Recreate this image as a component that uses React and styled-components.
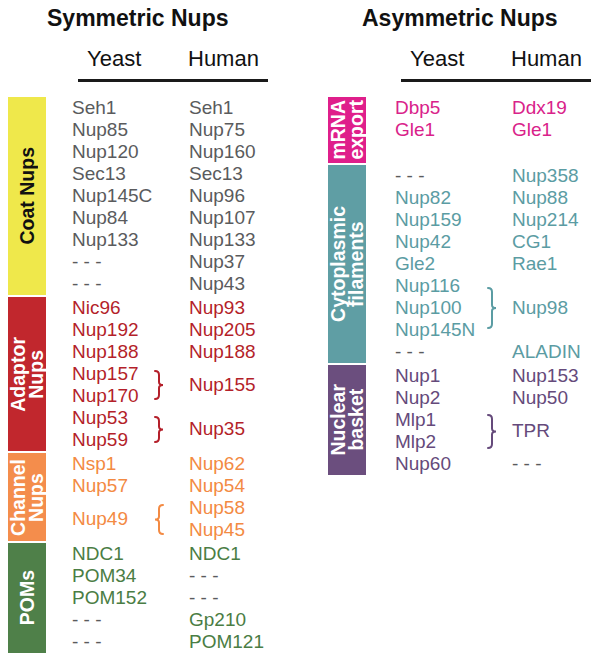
import { memo } from 'react'
import styled, { createGlobalStyle } from 'styled-components'

const GRAY = '#5a5b5d'

const panels = [
  {
    title: 'Symmetric Nups',
    titleIndent: 39,
    headIndent: 70,
    listIndent: 26,
    cols: '82px 35px auto',
    sections: [
      {
        label: ['Coat Nups'],
        bar: '#efe84b',
        labelColor: '#111',
        color: GRAY,
        rows: 9,
        yeast: ['Seh1', 'Nup85', 'Nup120', 'Sec13', 'Nup145C', 'Nup84', 'Nup133', '---', '---'],
        human: ['Seh1', 'Nup75', 'Nup160', 'Sec13', 'Nup96', 'Nup107', 'Nup133', 'Nup37', 'Nup43'],
        braces: []
      },
      {
        label: ['Adaptor', 'Nups'],
        bar: '#c1272d',
        labelColor: '#fff',
        color: '#b41f2a',
        rows: 7,
        yeast: ['Nic96', 'Nup192', 'Nup188', 'Nup157', 'Nup170', 'Nup53', 'Nup59'],
        human: ['Nup93', 'Nup205', 'Nup188', { text: 'Nup155', span: 2 }, { text: 'Nup35', span: 2 }],
        braces: [
          { row: 4, span: 2, h: 30, dir: 'right' },
          { row: 6, span: 2, h: 27, dir: 'right' }
        ]
      },
      {
        label: ['Channel', 'Nups'],
        bar: '#f48d4c',
        labelColor: '#fff',
        color: '#f38a43',
        rows: 4,
        yeast: ['Nsp1', 'Nup57', { text: 'Nup49', span: 2 }],
        human: ['Nup62', 'Nup54', 'Nup58', 'Nup45'],
        braces: [{ row: 3, span: 2, h: 31, dir: 'left' }]
      },
      {
        label: ['POMs'],
        bar: '#4f8049',
        labelColor: '#fff',
        color: '#4a7d44',
        rows: 5,
        yeast: ['NDC1', 'POM34', 'POM152', '---', '---'],
        human: ['NDC1', '---', '---', 'Gp210', 'POM121'],
        braces: []
      }
    ]
  },
  {
    title: 'Asymmetric Nups',
    titleIndent: 34,
    headIndent: 73,
    listIndent: 29,
    cols: '92px 25px auto',
    sections: [
      {
        label: ['mRNA', 'export'],
        bar: '#df1f8b',
        labelColor: '#fff',
        color: '#d9228a',
        rows: 3,
        yeast: ['Dbp5', 'Gle1', ''],
        human: ['Ddx19', 'Gle1', ''],
        braces: []
      },
      {
        label: ['Cytoplasmic', 'filaments'],
        bar: '#5f9ea4',
        labelColor: '#fff',
        color: '#5b9ca3',
        rows: 9,
        yeast: ['---', 'Nup82', 'Nup159', 'Nup42', 'Gle2', 'Nup116', 'Nup100', 'Nup145N', '---'],
        human: ['Nup358', 'Nup88', 'Nup214', 'CG1', 'Rae1', { text: 'Nup98', span: 3 }, 'ALADIN'],
        braces: [{ row: 6, span: 3, h: 42, dir: 'right' }]
      },
      {
        label: ['Nuclear', 'basket'],
        bar: '#6b4e7e',
        labelColor: '#fff',
        color: '#654a7b',
        rows: 5,
        yeast: ['Nup1', 'Nup2', 'Mlp1', 'Mlp2', 'Nup60'],
        human: ['Nup153', 'Nup50', { text: 'TPR', span: 2 }, '---'],
        braces: [{ row: 3, span: 2, h: 35, dir: 'right' }]
      }
    ]
  }
]

// turn a column of names into grid cells with row start + span
function placeCells(items) {
  let row = 1
  return items.map((item) => {
    const cell = typeof item === 'string' ? { text: item, span: 1 } : item
    const placed = { ...cell, row }
    row += cell.span
    return placed
  })
}

function Brace({ h, dir, color }) {
  const m = h / 2
  const d = `M1 1 C4 1 5 2 5 5 L5 ${m - 3} C5 ${m - 1} 6 ${m} 9 ${m} C6 ${m} 5 ${m + 1} 5 ${m + 3} L5 ${h - 5} C5 ${h - 2} 4 ${h - 1} 1 ${h - 1}`
  return (
    <svg width="10" height={h} viewBox={`0 0 10 ${h}`}>
      <path
        d={d}
        fill="none"
        stroke={color}
        strokeWidth="2"
        strokeLinecap="round"
        transform={dir === 'left' ? 'translate(10 0) scale(-1 1)' : undefined}
      />
    </svg>
  )
}

const Section = memo(function Section({ section, indent, cols }) {
  const yeast = placeCells(section.yeast)
  const human = placeCells(section.human)
  return (
    <SectionRow>
      <Bar $bg={section.bar} $rows={section.rows}>
        <BarLabel $color={section.labelColor}>
          {section.label.map((line) => <span key={line}>{line}</span>)}
        </BarLabel>
      </Bar>
      <ListGrid $rows={section.rows} $cols={cols} $indent={indent}>
        {yeast.map((c) => c.text && (
          <Cell key={'y' + c.row} $col={1} $row={c.row} $span={c.span}
            $color={c.text === '---' ? GRAY : section.color}>
            {c.text === '---' ? '- - -' : c.text}
          </Cell>
        ))}
        {section.braces.map((b) => (
          <BraceCell key={'b' + b.row} $row={b.row} $span={b.span}>
            <Brace h={b.h} dir={b.dir} color={section.color} />
          </BraceCell>
        ))}
        {human.map((c) => c.text && (
          <Cell key={'h' + c.row} $col={3} $row={c.row} $span={c.span}
            $color={c.text === '---' ? GRAY : section.color}>
            {c.text === '---' ? '- - -' : c.text}
          </Cell>
        ))}
      </ListGrid>
    </SectionRow>
  )
})

export default memo(function App() {
  return (
    <>
      <GlobalStyle />
      <Page>
        {panels.map((panel) => (
          <Panel key={panel.title}>
            <Title $indent={panel.titleIndent}>{panel.title}</Title>
            <HeadRow $indent={panel.headIndent}>
              <span>Yeast</span>
              <span>Human</span>
            </HeadRow>
            <Sections>
              {panel.sections.map((s) => (
                <Section key={s.label.join(' ')} section={s} indent={panel.listIndent} cols={panel.cols} />
              ))}
            </Sections>
          </Panel>
        ))}
      </Page>
    </>
  )
})

const GlobalStyle = createGlobalStyle`
  body {
    margin: 0;
    background: #fff;
    font-family: "Liberation Sans", Arial, sans-serif;
  }
`

const Page = styled.div`
  display: flex;
  width: 600px;
  height: 659px;
  padding-left: 8px;
  box-sizing: border-box;
`

const Panel = styled.section`
  display: flex;
  flex-direction: column;
  width: 320px;

  &:last-child {
    width: 272px;
  }
`

const Title = styled.h2`
  margin: 5px 0 0;
  padding-left: ${(p) => p.$indent}px;
  font-size: 23px;
  line-height: 26px;
  font-weight: bold;
  color: #111;
`

const HeadRow = styled.div`
  display: grid;
  grid-template-columns: 101px auto;
  width: 190px;
  margin: 16px 0 0 ${(p) => p.$indent}px;
  padding: 0 0 8px 9px;
  box-sizing: border-box;
  border-bottom: 3px solid #1a1a1a;
  font-size: 22px;
  line-height: 24px;
  color: #111;
`

const Sections = styled.div`
  display: flex;
  flex-direction: column;
  gap: 2px;
  margin-top: 15px;
`

const SectionRow = styled.div`
  display: flex;
`

const Bar = styled.div`
  flex: 0 0 38px;
  height: ${(p) => p.$rows * 22}px;
  background: ${(p) => p.$bg};
  display: flex;
  align-items: center;
  justify-content: center;
  overflow: hidden;
`

const BarLabel = styled.div`
  writing-mode: vertical-rl;
  transform: rotate(180deg);
  display: flex;
  flex-direction: column;
  align-items: center;
  font-size: 19.5px;
  line-height: 18px;
  font-weight: bold;
  color: ${(p) => p.$color};
  white-space: nowrap;
`

const ListGrid = styled.div`
  display: grid;
  grid-template-columns: ${(p) => p.$cols};
  grid-template-rows: repeat(${(p) => p.$rows}, 22px);
  margin-left: ${(p) => p.$indent}px;
`

const Cell = styled.div`
  grid-column: ${(p) => p.$col};
  grid-row: ${(p) => p.$row} / span ${(p) => p.$span};
  align-self: center;
  font-size: 19px;
  line-height: 22px;
  color: ${(p) => p.$color};
  white-space: nowrap;
`

const BraceCell = styled.div`
  grid-column: 2;
  grid-row: ${(p) => p.$row} / span ${(p) => p.$span};
  align-self: center;
  display: flex;
`
